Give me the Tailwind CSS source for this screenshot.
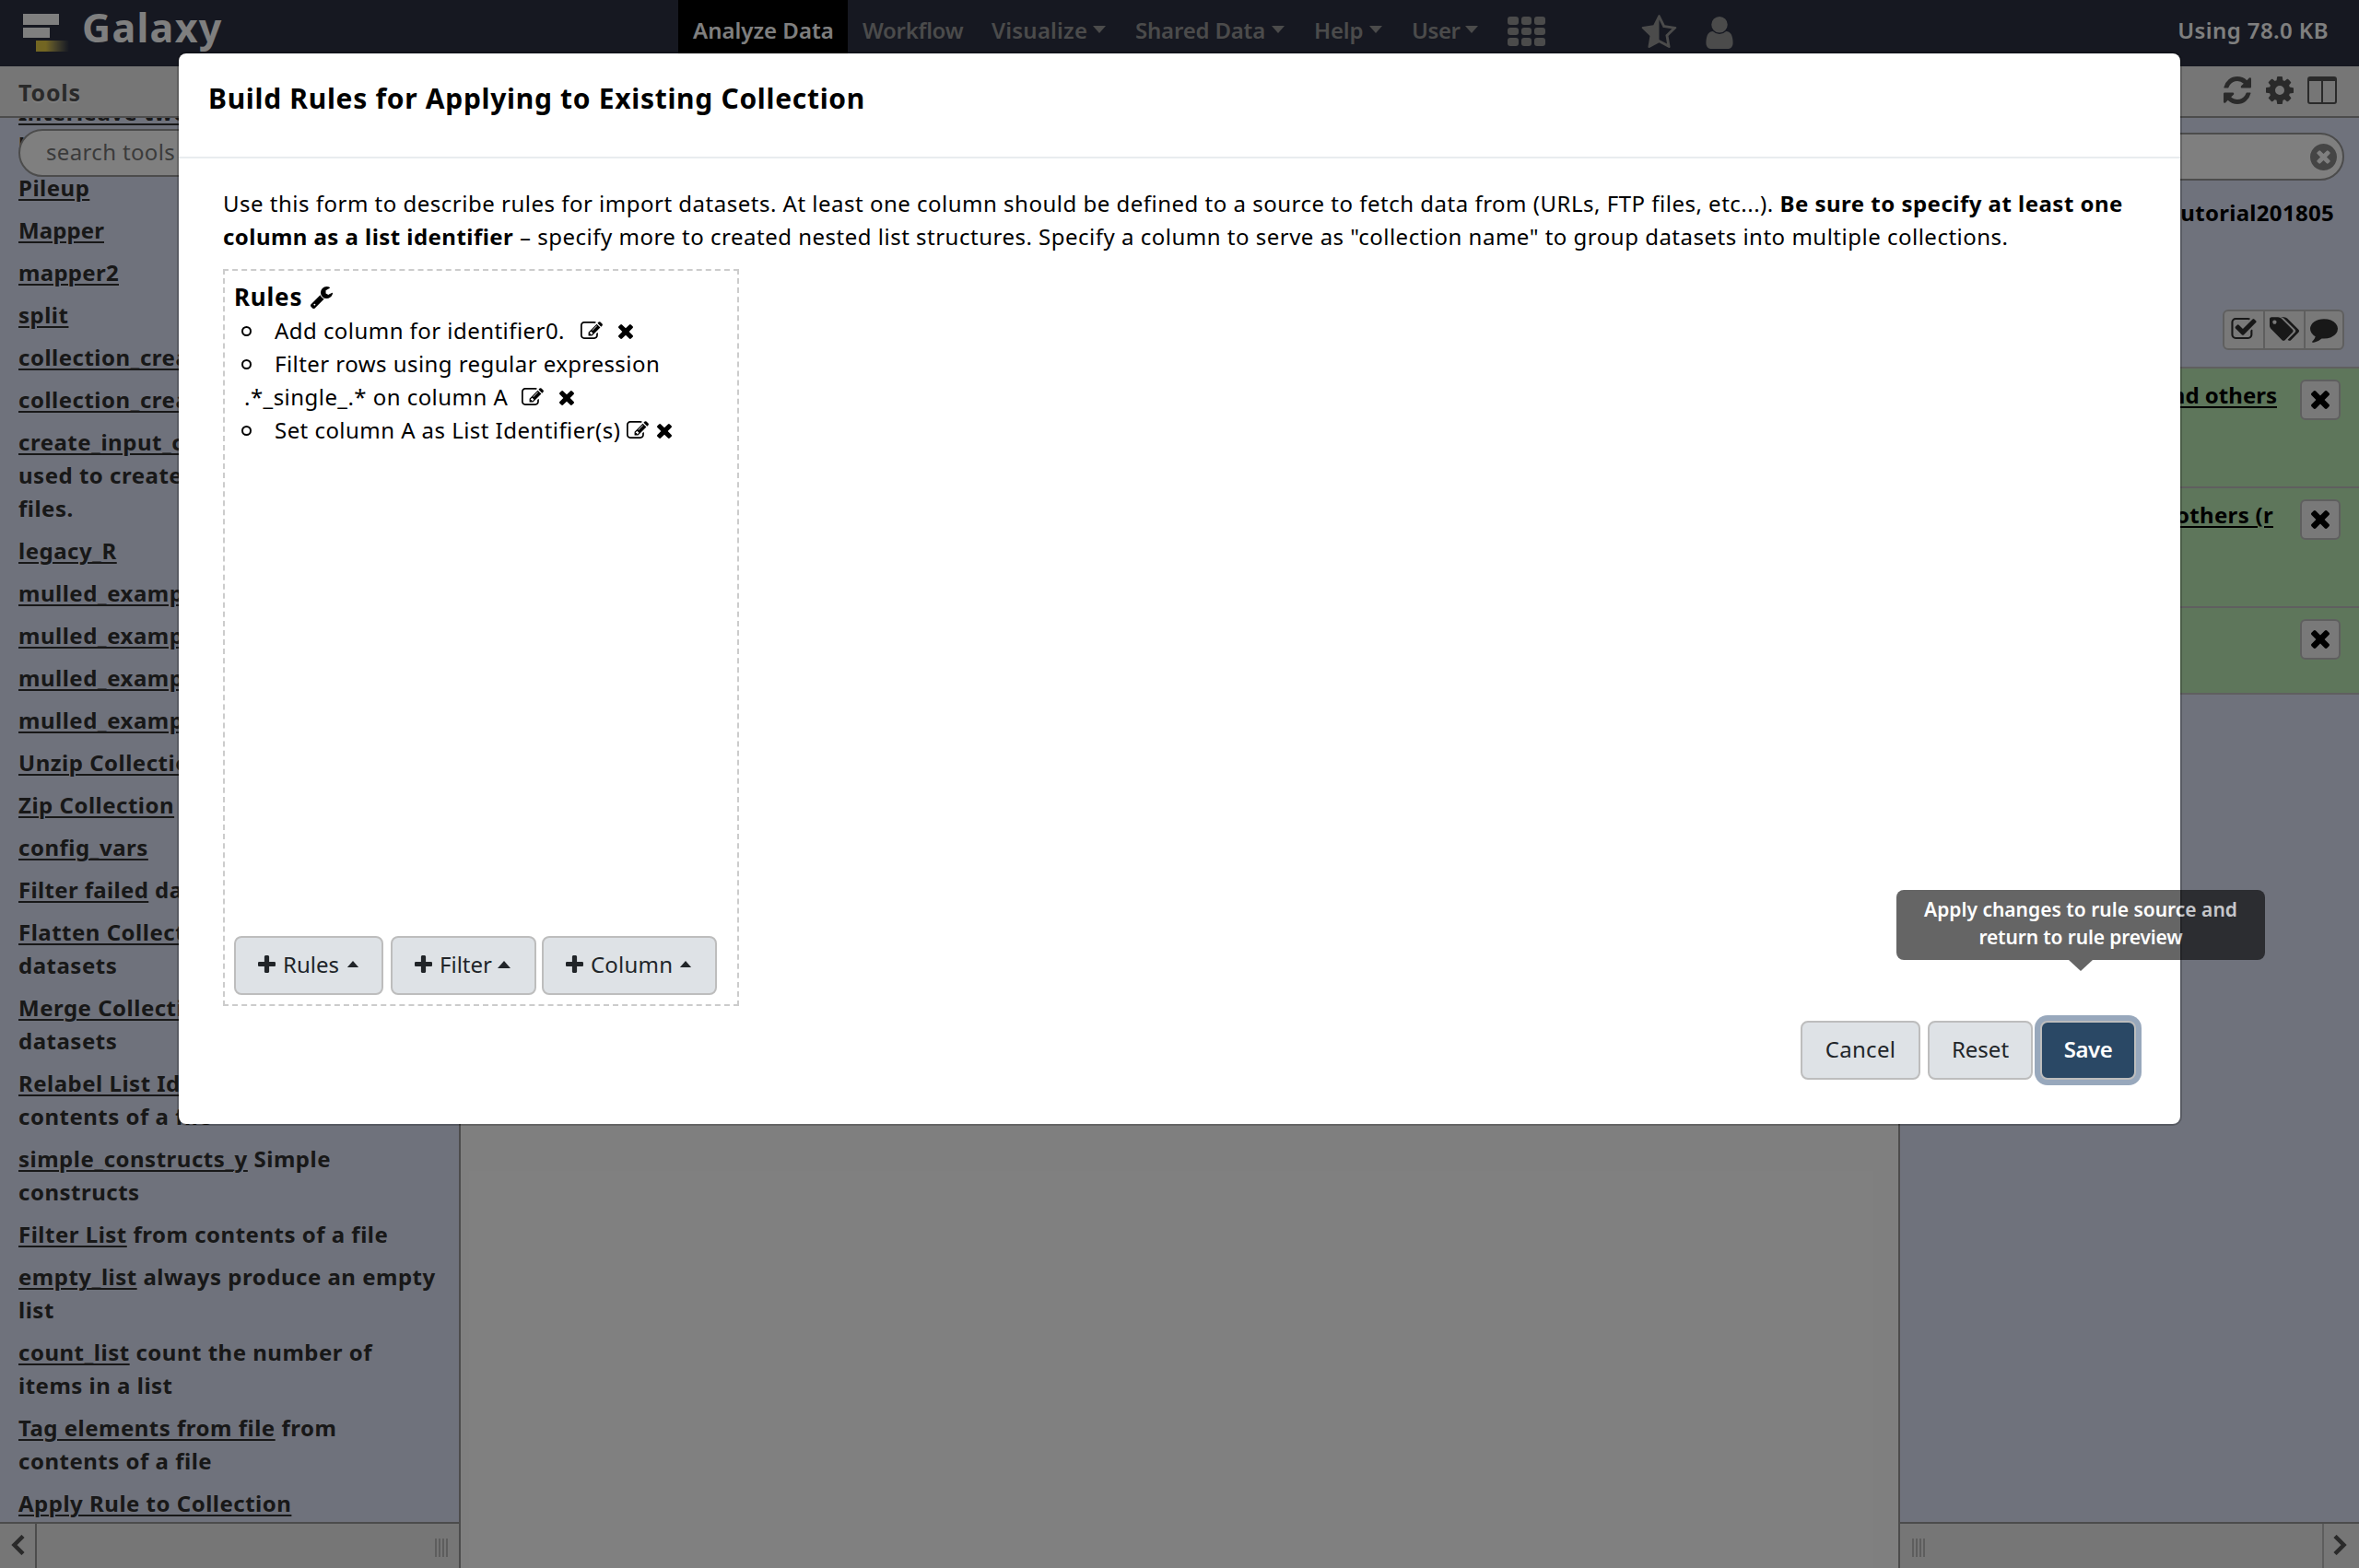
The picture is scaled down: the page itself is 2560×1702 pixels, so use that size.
<!DOCTYPE html>
<html lang="en">
<head>
<meta charset="utf-8">
<title>Galaxy</title>
<script src="https://cdn.jsdelivr.net/npm/@tailwindcss/browser@4"></script>
</head>
<body class="overflow-hidden">
<svg class="hidden">
  <symbol id="times" viewBox="302 366 1188 1188"><path d="M1490 1322q0 40-28 68l-136 136q-28 28-68 28t-68-28l-294-294-294 294q-28 28-68 28t-68-28l-136-136q-28-28-28-68t28-68l294-294-294-294q-28-28-28-68t28-68l136-136q28-28 68-28t68 28l294 294 294-294q28-28 68-28t68 28l136 136q28 28 28 68t-28 68l-294 294 294 294q28 28 28 68z"/></symbol>
  <symbol id="plus" viewBox="192 128 1408 1408"><path d="M1600 736v192q0 40-28 68t-68 28h-416v416q0 40-28 68t-68 28h-192q-40 0-68-28t-28-68v-416h-416q-40 0-68-28t-28-68v-192q0-40 28-68t68-28h416v-416q0-40 28-68t68-28h192q40 0 68 28t28 68v416h416q40 0 68 28t28 68z"/></symbol>
  <symbol id="edit" viewBox="0 128 1792 1408"><path d="M888 1184l116-116-152-152-116 116v56h96v96h56zm440-720q-16-16-33 1l-350 350q-17 17-1 33t33-1l350-350q17-17 1-33zm80 594v190q0 119-84.500 203.500t-203.500 84.500h-832q-119 0-203.500-84.500t-84.500-203.500v-832q0-119 84.500-203.500t203.500-84.500h832q63 0 117 25 15 7 18 23 3 17-9 29l-49 49q-14 14-32 8-23-6-45-6h-832q-66 0-113 47t-47 113v832q0 66 47 113t113 47h832q66 0 113-47t47-113v-126q0-13 9-22l64-64q15-15 35-7t20 29zm-96-738l288 288-672 672h-288v-288zm444 132l-92 92-288-288 92-92q28-28 68-28t68 28l152 152q28 28 28 68t-28 68z"/></symbol>
  <symbol id="wrench" viewBox="85 128 1641 1643"><path d="M448 1472q0-26-19-45t-45-19-45 19-19 45 19 45 45 19 45-19 19-45zm644-420l-682 682q-37 37-90 37-52 0-91-37l-106-108q-38-36-38-90 0-53 38-91l681-681q39 98 114.500 173.500t173.500 114.500zm634-435q0 39-23 106-47 134-164.500 217.500t-258.500 83.500q-185 0-316.500-131.500t-131.500-316.500 131.500-316.500 316.500-131.500q58 0 121.500 16.500t107.500 46.500q16 11 16 28t-16 28l-293 169v224l193 107q5-3 79-48.500t135.500-81 70.500-35.500q15 0 23.500 10t8.500 25z"/></symbol>
  <symbol id="cog" viewBox="128 128 1536 1536"><path d="M1152 896q0-106-75-181t-181-75-181 75-75 181 75 181 181 75 181-75 75-181zm512-109v222q0 12-8 23t-20 13l-185 28q-19 54-39 91 35 50 107 138 10 12 10 25t-9 23q-27 37-99 108t-94 71q-12 0-26-9l-138-108q-44 23-91 38-16 136-29 186-7 28-36 28h-222q-14 0-24.500-8.500t-11.500-21.500l-28-184q-49-16-90-37l-141 107q-10 9-25 9-14 0-25-11-126-114-165-168-7-10-7-23 0-12 8-23 15-21 51-66.500t54-70.500q-27-50-41-99l-183-27q-13-2-21-12.500t-8-23.500v-222q0-12 8-23t19-13l186-28q14-46 39-92-40-57-107-138-10-12-10-24 0-10 9-23 26-36 98.500-107.500t94.500-71.500q13 0 26 10l138 107q44-23 91-38 16-136 29-186 7-28 36-28h222q14 0 24.500 8.500t11.500 21.500l28 184q49 16 90 37l142-107q9-9 24-9 13 0 25 10 129 119 165 170 7 8 7 22 0 12-8 23-15 21-51 66.500t-54 70.500q26 50 41 98l183 28q13 2 21 12.500t8 23.500z"/></symbol>
  <symbol id="refresh" viewBox="128 128 1536 1536"><path d="M1639 1056q0 5-1 7-64 268-268 434.500t-478 166.500q-146 0-282.500-55t-243.500-157l-129 129q-19 19-45 19t-45-19-19-45v-448q0-26 19-45t45-19h448q26 0 45 19t19 45-19 45l-137 137q71 66 161 102t187 36q134 0 250-65t186-179q11-17 53-117 8-23 30-23h192q13 0 22.500 9.500t9.500 22.500zm25-800v448q0 26-19 45t-45 19h-448q-26 0-45-19t-19-45 19-45l138-138q-148-137-349-137-134 0-250 65t-186 179q-11 17-53 117-8 23-30 23h-199q-13 0-22.500-9.500t-9.500-22.500v-7q65-268 270-434.500t480-166.500q146 0 284 55.500t245 156.500l130-129q19-19 45-19t45 19 19 45z"/></symbol>
  <symbol id="star-half" viewBox="64 32 1664 1588"><path d="M1250 957l257-250-356-52-66-10-30-60-159-322v963l59 31 318 168-60-355-12-66zm452-262l-363 354 86 500q5 33-6 51.500t-34 18.500q-17 0-40-12l-449-236-449 236q-23 12-40 12-23 0-34-18.500t-6-51.500l86-500-364-354q-32-32-23-59.500t54-34.500l502-73 225-455q20-41 49-41 28 0 49 41l225 455 502 73q45 7 54 34.500t-24 59.500z"/></symbol>
  <symbol id="user" viewBox="256 128 1280 1536"><path d="M1536 1399q0 109-62.500 187t-150.500 78h-854q-88 0-150.500-78t-62.500-187q0-85 8.500-160.500t31.500-152 58.500-131 94-89 134.500-34.500q131 128 313 128t313-128q76 0 134.500 34.500t94 89 58.500 131 31.500 152 8.500 160.500zm-256-887q0 159-112.500 271.500t-271.500 112.500-271.500-112.500-112.500-271.500 112.500-271.500 271.500-112.500 271.500 112.500 112.500 271.500z"/></symbol>
  <symbol id="times-circle" viewBox="128 128 1536 1536"><path d="M1277 1122q0-26-19-45l-181-181 181-181q19-19 19-45 0-27-19-46l-90-90q-19-19-46-19-26 0-45 19l-181 181-181-181q-19-19-45-19-27 0-46 19l-90 90q-19 19-19 46 0 26 19 45l181 181-181 181q-19 19-19 45 0 27 19 46l90 90q19 19 46 19 26 0 45-19l181-181 181 181q19 19 45 19 27 0 46-19l90-90q19-19 19-46zm387-226q0 209-103 385.500t-279.500 279.500-385.500 103-385.500-103-279.500-279.500-103-385.500 103-385.500 279.500-279.500 385.500-103 385.500 103 279.500 279.500 103 385.500z"/></symbol>
  <symbol id="check" viewBox="64 128 1664 1408"><path d="M1472 930v318q0 119-84.500 203.500t-203.500 84.500h-832q-119 0-203.500-84.500t-84.500-203.500v-832q0-119 84.500-203.500t203.500-84.500h832q63 0 117 25 15 7 18 23 3 17-9 29l-49 49q-10 10-23 10-3 0-9-2-23-6-45-6h-832q-66 0-113 47t-47 113v832q0 66 47 113t113 47h832q66 0 113-47t47-113v-254q0-13 9-22l64-64q10-10 23-10 6 0 12 3 20 8 20 29zm231-489l-814 814q-24 24-57 24t-57-24l-430-430q-24-24-24-57t24-57l110-110q24-24 57-24t57 24l263 263 647-647q24-24 57-24t57 24l110 110q24 24 24 57t-24 57z"/></symbol>
  <symbol id="tags" viewBox="0 128 1899 1516"><path d="M448 448q0-53-37.500-90.500t-90.500-37.500-90.500 37.500-37.500 90.500 37.500 90.500 90.500 37.500 90.500-37.500 37.500-90.500zm1067 576q0 53-37 90l-491 492q-39 37-91 37-53 0-90-37l-715-716q-38-37-64.500-101t-26.500-117v-416q0-52 38-90t90-38h416q53 0 117 26.500t102 64.500l715 714q37 39 37 91zm384 0q0 53-37 90l-491 492q-39 37-91 37-36 0-59-14t-53-45l470-470q37-37 37-90 0-52-37-91l-715-714q-38-38-102-64.500t-117-26.500h224q53 0 117 26.500t102 64.500l715 714q37 39 37 91z"/></symbol>
  <symbol id="comment" viewBox="0 256 1792 1536"><path d="M1792 896q0 174-120 321.500t-326 233-450 85.500q-70 0-145-8-198 175-460 242-49 14-114 22-17 2-30.500-9t-17.500-29v-1q-3-4-.5-12t2-10 4.500-9.500l6-9 7-8.500 8-9q7-8 31-34.500t34.500-38 31-39.500 32.500-51 27-59 26-76q-157-89-247.500-220t-90.500-281q0-130 71-248.500t191-204.500 286-136.500 348-50.500q244 0 450 85.500t326 233 120 321.500z"/></symbol>
  <symbol id="down" viewBox="0 0 14 8"><path d="M0 0h14l-7 8z"/></symbol>
  <symbol id="up" viewBox="0 0 14 8"><path d="M0 8l7-8 7 8z"/></symbol>
</svg>

<div class="relative flex h-[1702px] w-[2560px] flex-col overflow-hidden bg-white font-['Noto_Sans',sans-serif] text-[24px] leading-9 text-black">

  <!-- masthead -->
  <header class="flex h-[72px] shrink-0 items-start bg-[#2c3143] font-semibold text-[#969696]">
    <div class="flex w-[736px] pl-[25px] pt-[15px]">
      <div class="flex w-[50px] flex-col gap-[3px]">
        <span class="h-3 w-[39px] bg-white"></span>
        <span class="h-[11px] w-[29px] bg-white"></span>
        <span class="ml-3.5 h-3 w-9 bg-linear-to-r from-[#e6cc45] from-30% to-[#2c3143]"></span>
      </div>
      <span class="ml-[14px] mt-[-17px] text-[43px] leading-[64px] font-bold tracking-[1.3px] text-white">Galaxy</span>
    </div>
    <nav class="flex h-[72px] whitespace-nowrap">
      <a class="flex w-[184px] bg-black pl-4 pt-[15px] text-white">Analyze Data</a>
      <a class="flex w-[140px] pl-4 pt-[15px] tracking-[-0.3px]">Workflow</a>
      <a class="flex w-[156px] pl-4 pt-[15px] tracking-[0.2px]">Visualize<svg class="ml-auto mr-4 mt-[13px] h-2 w-3.5 fill-current"><use href="#down"/></svg></a>
      <a class="flex w-[194px] pl-4 pt-[15px] tracking-[-0.2px]">Shared Data<svg class="ml-auto mr-4 mt-[13px] h-2 w-3.5 fill-current"><use href="#down"/></svg></a>
      <a class="flex w-[106px] pl-4 pt-[15px] tracking-[-0.2px]">Help<svg class="ml-auto mr-4 mt-[13px] h-2 w-3.5 fill-current"><use href="#down"/></svg></a>
      <a class="flex w-[104px] pl-4 pt-[15px] tracking-[-0.4px]">User<svg class="ml-auto mr-4 mt-[13px] h-2 w-3.5 fill-current"><use href="#down"/></svg></a>
      <div class="ml-4 mt-[18px] grid h-8 w-[41px] grid-cols-3 grid-rows-3 gap-[3px]">
        <i class="rounded-[3px] bg-current"></i><i class="rounded-[3px] bg-current"></i><i class="rounded-[3px] bg-current"></i>
        <i class="rounded-[3px] bg-current"></i><i class="rounded-[3px] bg-current"></i><i class="rounded-[3px] bg-current"></i>
        <i class="rounded-[3px] bg-current"></i><i class="rounded-[3px] bg-current"></i><i class="rounded-[3px] bg-current"></i>
      </div>
      <svg class="ml-[104px] mt-4 h-9 w-[39px] fill-current"><use href="#star-half"/></svg>
      <svg class="ml-[31px] mt-[18px] h-[35px] w-[30px] fill-current"><use href="#user"/></svg>
    </nav>
    <span class="ml-auto mr-[33px] pt-[15px] tracking-[0.4px] whitespace-nowrap text-white">Using 78.0 KB</span>
  </header>

  <div class="flex min-h-0 grow">
    <!-- tool panel -->
    <aside class="flex w-[500px] shrink-0 flex-col border-r-2 border-[#999] bg-[#dfe5f9] text-[#303030]">
      <div class="h-14 shrink-0 border-b-2 border-[#999] bg-[#ececec] pl-5 pt-[10px] text-[25px] font-bold tracking-[0.8px] text-[#555] text-shadow-[0_2px_0_#fff]">Tools</div>
      <div class="relative min-h-0 grow overflow-hidden">
        <ul class="-mt-[30px] flex flex-col gap-2.5 pl-5 pt-1.5 font-bold tracking-[0.5px] whitespace-nowrap underline-offset-[3px] [&_u]:decoration-2">
          <li><u>Interleave two</u><br>lists</li>
          <li><u>Pileup</u></li>
          <li><u class="tracking-[0.1px]">Mapper</u></li>
          <li><u class="tracking-[0.3px]">mapper2</u></li>
          <li><u>split</u></li>
          <li><u>collection_creates_pair</u></li>
          <li><u>collection_creates_list</u></li>
          <li><u>create_input_collection</u> Tool<br>used to create collection<br>files.</li>
          <li><u>legacy_R</u></li>
          <li><u>mulled_example</u></li>
          <li><u>mulled_example</u></li>
          <li><u>mulled_example</u></li>
          <li><u>mulled_example</u></li>
          <li><u>Unzip Collection</u></li>
          <li><u>Zip Collection</u></li>
          <li><u>config_vars</u></li>
          <li><u class="tracking-[0.35px]">Filter failed</u> datasets</li>
          <li><u>Flatten Collection</u> of<br>datasets</li>
          <li><u>Merge Collections</u> of<br>datasets</li>
          <li><u>Relabel List Identifiers</u> from<br>contents of a file</li>
          <li><u>simple_constructs_y</u> Simple<br>constructs</li>
          <li><u>Filter List</u> from contents of a file</li>
          <li><u>empty_list</u> always produce an empty<br>list</li>
          <li><u>count_list</u> count the number of<br>items in a list</li>
          <li><u>Tag elements from file</u> from<br>contents of a file</li>
          <li><u>Apply Rule to Collection</u></li>
        </ul>
        <div class="absolute left-5 top-3 flex h-[52px] w-[460px] items-center rounded-full border-2 border-[#999] bg-white pl-[28px] pb-0.5 tracking-[0.35px] text-[#777]">search tools</div>
      </div>
      <div class="flex h-[50px] shrink-0 border-t-2 border-[#999] bg-[#ececec]">
        <div class="w-10 border-r-2 border-[#999] pl-3 pt-3"><svg class="h-[22px] w-[15px] fill-none stroke-[#555] stroke-[4.500]" viewBox="0 0 15 22"><path d="M13 1.500L3.500 11l9.500 9.500"/></svg></div>
        <div class="ml-auto mr-3 mt-4 flex h-5 gap-0.5"><i class="w-0.5 bg-[#bbb]"></i><i class="w-0.5 bg-[#bbb]"></i><i class="w-0.5 bg-[#bbb]"></i><i class="w-0.5 bg-[#bbb]"></i></div>
      </div>
    </aside>

    <main class="grow bg-white"></main>

    <!-- history panel -->
    <aside class="flex w-[500px] shrink-0 flex-col border-l-2 border-[#999] bg-[#dfe5f9]">
      <div class="flex h-14 shrink-0 justify-end border-b-2 border-[#999] bg-[#ececec] pr-6 pt-[11px]">
        <svg class="h-[30px] w-[30px] fill-[#555]"><use href="#refresh"/></svg>
        <svg class="ml-4 h-[30px] w-[30px] fill-[#555]"><use href="#cog"/></svg>
        <svg class="ml-[15px] h-[30px] w-8 fill-[#555]" viewBox="0 0 32 30"><path fill-rule="evenodd" d="M3 0h26q3 0 3 3v24q0 3-3 3h-26q-3 0-3-3v-24q0-3 3-3zM2 5v22q0 1 1 1h12v-23zM17 5v23h12q1 0 1-1v-22z"/></svg>
      </div>
      <div class="mx-4 mt-4 flex h-[52px] items-center justify-end rounded-full border-2 border-[#999] bg-white pr-1.5"><svg class="h-[29px] w-[29px] fill-[#8a8a8a]"><use href="#times-circle"/></svg></div>
      <div class="mt-[17px] pr-[27px] text-right font-bold tracking-[0.3px]">tutorial201805</div>
      <div class="ml-auto mr-4 mt-[87px] flex h-11 w-[132px] rounded-md border-2 border-[#bfbfbf] bg-[#f2f2f2] [&_svg]:fill-[#303030]">
        <div class="w-11 border-r-2 border-[#bfbfbf] pl-[7px] pt-[7px]"><svg class="h-[23px] w-7"><use href="#check"/></svg></div>
        <div class="w-11 border-r-2 border-[#bfbfbf] pl-[5px] pt-[6px]"><svg class="h-[26px] w-8"><use href="#tags"/></svg></div>
        <div class="pl-[5px] pt-2"><svg class="h-[26px] w-[30px]"><use href="#comment"/></svg></div>
      </div>
      <div class="mt-[18px] border-b-2 border-[#bfbfbf] font-bold [&_u]:underline-offset-[3px] [&_u]:decoration-2">
        <div class="flex h-[130px] justify-end gap-[25px] border-t-2 border-[#bfbfbf] bg-[#bdecb7] pr-5 pt-3"><u class="-mt-px whitespace-nowrap">and others</u><span class="flex h-11 w-11 items-center justify-center rounded-md border-2 border-[#bfbfbf] bg-[#f2f2f2]"><svg class="h-5 w-5"><use href="#times"/></svg></span></div>
        <div class="flex h-[130px] justify-end gap-[29px] border-t-2 border-[#bfbfbf] bg-[#bdecb7] pr-5 pt-3"><u class="-mt-px tracking-[0.3px] whitespace-nowrap">others (r</u><span class="flex h-11 w-11 items-center justify-center rounded-md border-2 border-[#bfbfbf] bg-[#f2f2f2]"><svg class="h-5 w-5"><use href="#times"/></svg></span></div>
        <div class="flex h-[94px] justify-end border-t-2 border-[#bfbfbf] bg-[#bdecb7] pr-5 pt-3"><span class="flex h-11 w-11 items-center justify-center rounded-md border-2 border-[#bfbfbf] bg-[#f2f2f2]"><svg class="h-5 w-5"><use href="#times"/></svg></span></div>
      </div>
      <div class="mt-auto flex h-[50px] shrink-0 border-t-2 border-[#999] bg-[#ececec]">
        <div class="ml-[13px] mt-4 flex h-5 gap-0.5"><i class="w-0.5 bg-[#bbb]"></i><i class="w-0.5 bg-[#bbb]"></i><i class="w-0.5 bg-[#bbb]"></i><i class="w-0.5 bg-[#bbb]"></i></div>
        <div class="ml-auto w-10 border-l-2 border-[#bbb] pl-2.5 pt-3"><svg class="h-[22px] w-[15px] fill-none stroke-[#555] stroke-[4.500]" viewBox="0 0 15 22"><path d="M2 1.500l9.500 9.500L2 20.500"/></svg></div>
      </div>
    </aside>
  </div>

  <div class="absolute inset-0 bg-black/50"></div>

  <!-- rule builder dialog -->
  <section class="absolute left-48 top-14 flex h-[1166px] w-[2176px] flex-col rounded-[10px] border-2 border-black/20 bg-white bg-clip-padding whitespace-nowrap">
    <h4 class="h-[114px] shrink-0 border-b-2 border-[#e9ecef] pl-8 pt-7 text-[30px] leading-[42px] font-bold tracking-[0.7px]">Build Rules for Applying to Existing Collection</h4>
    <div class="pl-12 pt-[31px]">
      <p class="tracking-[0.5px]">Use this form to describe rules for import datasets. At least one column should be defined to a source to fetch data from (URLs, FTP files, etc...). <b class="font-bold tracking-[0.48px]">Be sure to specify at least one</b><br><b class="font-bold tracking-[0.45px]">column as a list identifier</b> – specify more to created nested list structures. Specify a column to serve as "collection name" to group datasets into multiple collections.</p>
      <div class="mt-[17px] flex h-[800px] w-[560px] flex-col border-2 border-dashed border-[#ccc] px-2.5 pb-2.5 pt-2.5">
        <div class="flex h-[37px] text-[26px] font-bold tracking-[0.8px]">Rules<svg class="ml-[9px] mt-[7px] h-6 w-6"><use href="#wrench"/></svg></div>
        <ol class="pl-2 tracking-[0.45px]">
          <li class="flex h-9"><i class="mt-[13px] mr-[25px] h-[11px] w-[11px] rounded-full border-2 border-black"></i>Add column for identifier0.<svg class="ml-[17px] mt-2 h-[19px] w-6"><use href="#edit"/></svg><svg class="ml-[17px] mt-[11px] h-4 w-4"><use href="#times"/></svg></li>
          <li class="flex h-9"><i class="mt-[13px] mr-[25px] h-[11px] w-[11px] rounded-full border-2 border-black"></i>Filter rows using regular expression</li>
          <li class="flex h-9 pl-[3px]">.*_single_.* on column A<svg class="ml-[15px] mt-2 h-[19px] w-6"><use href="#edit"/></svg><svg class="ml-[17px] mt-[11px] h-4 w-4"><use href="#times"/></svg></li>
          <li class="flex h-9"><i class="mt-[13px] mr-[25px] h-[11px] w-[11px] rounded-full border-2 border-black"></i>Set column A as List Identifier(s)<svg class="ml-[7px] mt-2 h-[19px] w-6"><use href="#edit"/></svg><svg class="ml-[9px] mt-[11px] h-4 w-4"><use href="#times"/></svg></li>
        </ol>
        <div class="mt-auto flex text-[#212529] [&_svg]:fill-current">
          <button class="flex h-16 w-[162px] items-center rounded-lg border-2 border-[#bdbdbd] bg-[#dee2e6] pl-6 pb-[3px]"><svg class="h-[19px] w-[19px]"><use href="#plus"/></svg><span class="ml-2">Rules</span><svg class="ml-2 h-[7px] w-3.5"><use href="#up"/></svg></button>
          <button class="ml-2 flex h-16 w-[158px] items-center rounded-lg border-2 border-[#bdbdbd] bg-[#dee2e6] pl-6 pb-[3px]"><svg class="h-[19px] w-[19px]"><use href="#plus"/></svg><span class="ml-2">Filter</span><svg class="ml-[5px] h-2 w-4"><use href="#up"/></svg></button>
          <button class="ml-1.5 flex h-16 w-[190px] items-center rounded-lg border-2 border-[#bdbdbd] bg-[#dee2e6] pl-6 pb-[3px]"><svg class="h-[19px] w-[19px]"><use href="#plus"/></svg><span class="ml-2 tracking-[0.2px]">Column</span><svg class="ml-[7px] h-[7px] w-3.5"><use href="#up"/></svg></button>
        </div>
      </div>
      <div class="mr-12 mt-4 flex justify-end text-[#212529]">
        <button class="h-16 w-[130px] rounded-lg border-2 border-[#bdbdbd] bg-[#dee2e6] pb-[3px] tracking-[0.3px]">Cancel</button>
        <button class="ml-2 h-16 w-[114px] rounded-lg border-2 border-[#bdbdbd] bg-[#dee2e6] pb-[3px]">Reset</button>
        <button class="ml-2 h-16 w-[104px] rounded-lg border-2 border-[#bdbdbd] bg-[#2a4865] pb-[3px] font-semibold tracking-[-0.5px] text-white ring-[6px] ring-[#98a8bc]">Save</button>
      </div>
    </div>
  </section>

  <!-- tooltip of the Save button -->
  <div class="absolute left-[2058px] top-[966px] flex flex-col items-center opacity-60">
    <div class="h-[76px] w-[400px] rounded-lg bg-black pt-1.5 text-center text-[21px] leading-[30px] font-semibold text-white">Apply changes to rule source and<br><span class="tracking-[-0.15px]">return to rule preview</span></div>
    <svg class="h-3 w-[26px]" viewBox="0 0 26 12"><path d="M0 0h26l-13 12z"/></svg>
  </div>
</div>
</body>
</html>
